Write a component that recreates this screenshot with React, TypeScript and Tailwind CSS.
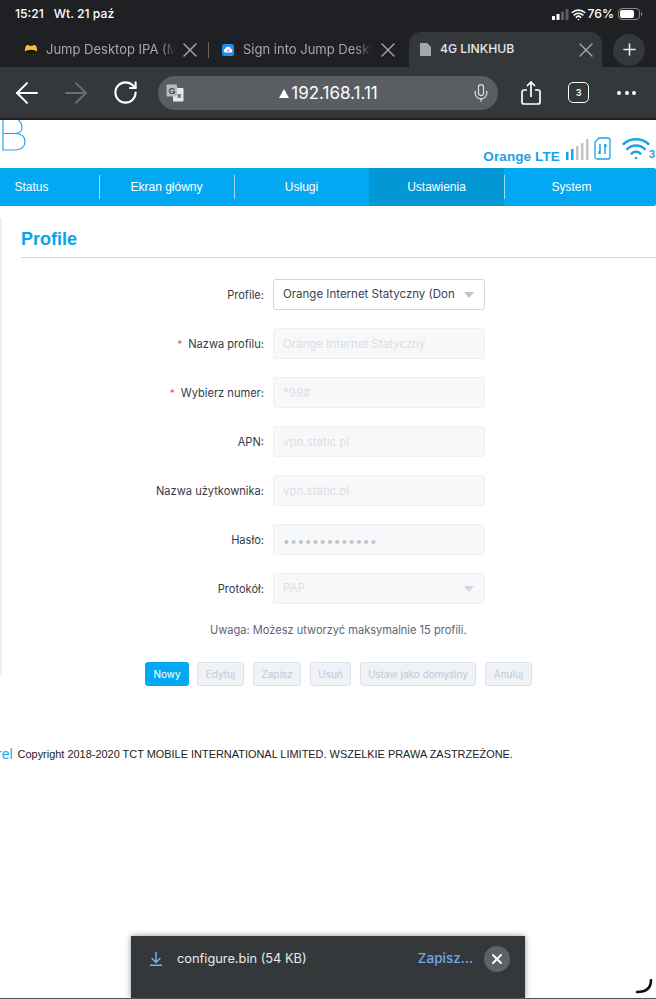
import { ArrowLeft, ArrowRight, Mic, Plus, RotateCw, Wifi, X } from 'lucide-react';

const fields = [
  { label: 'Nazwa profilu:', value: 'Orange Internet Statyczny', required: true },
  { label: 'Wybierz numer:', value: '*99#', required: true },
  { label: 'APN:', value: 'vpn.static.pl' },
  { label: 'Nazwa użytkownika:', value: 'vpn.static.pl' },
  { label: 'Hasło:', value: '•••••••••••••', password: true },
];

const navItems = [
  { name: 'Status', sep: true },
  { name: 'Ekran główny', sep: true },
  { name: 'Usługi' },
  { name: 'Ustawienia', sep: true, active: true },
  { name: 'System' },
];

const buttons = [
  { name: 'Edytuj', width: 'w-[47px]' },
  { name: 'Zapisz', width: 'w-[48px]' },
  { name: 'Usuń', width: 'w-[41px]' },
  { name: 'Ustaw jako domyślny', width: 'w-[116px]' },
  { name: 'Anuluj', width: 'w-[47px]' },
];

const Caret = ({ color }: { color: string }) => (
  <svg width="10" height="6" viewBox="0 0 10 6" className="shrink-0">
    <path d="M0 0h10L5 6z" fill={color} />
  </svg>
);

const Label = ({ text, required }: { text: string; required?: boolean }) => (
  <div className="flex w-[264px] shrink-0 items-center justify-end pt-[2px] text-[11.1px] text-[#333b4b]">
    {required && <span className="mr-[6px] text-[10px] text-[#f0504f]">*</span>}
    {text}
  </div>
);

const StatusBar = () => (
  <div className="flex h-[32px] items-center justify-between pl-[15px] pr-[13px] text-[12.2px] font-medium text-white">
    <div className="flex gap-[10px] pb-[3px]">
      <span>15:21</span>
      <span>Wt. 21 paź</span>
    </div>
    <div className="flex items-center gap-[4px] pb-[3px]">
      <svg width="17" height="11" viewBox="0 0 17 11" className="-mr-[2px]">
        <rect x="0" y="7" width="3" height="4" rx="0.6" fill="#fff" />
        <rect x="4.5" y="5" width="3" height="6" rx="0.6" fill="#fff" />
        <rect x="9" y="2.5" width="3" height="8.5" rx="0.6" fill="#5c5e62" />
        <rect x="13.5" y="0" width="3" height="11" rx="0.6" fill="#5c5e62" />
      </svg>
      <Wifi size={15} strokeWidth={2.6} color="#fff" className="-mr-[3px]" />
      <span>76%</span>
      <svg width="25" height="12" viewBox="0 0 25 12">
        <rect x="0.5" y="0.5" width="21" height="11" rx="3.5" fill="none" stroke="#85878a" />
        <rect x="2" y="2" width="14" height="8" rx="2" fill="#fff" />
        <path d="M23 4v4c.8-.3 1.3-1 1.3-2S23.800 4.300 23 4z" fill="#85878a" />
      </svg>
    </div>
  </div>
);

const TabStrip = () => (
  <div className="flex h-[35px] items-center text-[13px]">
    <div className="ml-[24px] flex shrink-0 items-center text-[#a5a7aa]">
      <svg width="14" height="12" viewBox="0 0 14 12" className="shrink-0">
        <path d="M1 6c0-3 1-5 2.500-5S5 2 7 2s2-1 3.500-1S13 3 13 6c0 3-3 5-6 5S1 9 1 6z" fill="#f3c02f" />
        <path d="M1 8c2-3 10-3 12 0-1 2-3 3-6 3S2 10 1 8z" fill="#16130c" />
      </svg>
      <span className="ml-[8px] w-[130px] overflow-hidden whitespace-nowrap [mask-image:linear-gradient(to_right,black_88%,transparent)]">
        Jump Desktop IPA (MG
      </span>
      <X size={24} strokeWidth={1.4} className="ml-[2px] shrink-0" />
    </div>
    <div className="ml-[6px] h-[16px] w-px shrink-0 bg-[#66686b]" />
    <div className="ml-[13px] flex shrink-0 items-center text-[#a5a7aa]">
      <svg width="12" height="12" viewBox="0 0 12 12" className="shrink-0">
        <rect width="12" height="12" rx="2.500" fill="#1e8ff0" />
        <path d="M3 8.500a2 2 0 0 1 .3-3.800A3 3 0 0 1 9 5a1.800 1.800 0 0 1 0 3.500z" fill="#fff" />
        <path d="M4.500 7 8 5 6.500 7.500z" fill="#e5483c" />
      </svg>
      <span className="ml-[9px] w-[129px] overflow-hidden whitespace-nowrap [mask-image:linear-gradient(to_right,black_88%,transparent)]">
        Sign into Jump Desktop
      </span>
      <X size={24} strokeWidth={1.4} className="ml-[4px] shrink-0" />
    </div>
    <div className="ml-[9px] flex h-[35px] w-[193px] shrink-0 items-center self-end rounded-t-[12px] bg-[#35383b] pl-[11px] text-[#e8e9ea]">
      <svg width="11" height="13" viewBox="0 0 11 13" className="shrink-0">
        <path d="M0 0h7l4 4v9H0z" fill="#a5a7aa" />
      </svg>
      <span className="ml-[9px] whitespace-nowrap text-[12.2px] font-medium">4G LINKHUB</span>
      <X size={24} strokeWidth={1.4} className="ml-auto mr-[4px] shrink-0 text-[#a5a7aa]" />
    </div>
    <div className="ml-[11px] flex h-[32px] w-[32px] shrink-0 items-center justify-center rounded-full bg-[#35383b]">
      <Plus size={19} strokeWidth={2} color="#e8e9ea" />
    </div>
  </div>
);

const Toolbar = () => (
  <div className="flex h-[53px] items-center border-b-2 border-[#1e1f21] bg-[#35383b] text-white">
    <ArrowLeft size={34} strokeWidth={1.4} className="ml-[10px] shrink-0" />
    <ArrowRight size={34} strokeWidth={1.4} className="ml-[15px] shrink-0 text-[#6c6e71]" />
    <RotateCw size={27} strokeWidth={1.8} className="ml-[19px] shrink-0" />
    <div className="ml-[19px] flex h-[34px] w-[340px] shrink-0 items-center rounded-full bg-[#5a5e62] pl-[8px] pr-[7px]">
      <svg width="18" height="18" viewBox="0 0 18 18" className="shrink-0">
        <rect x="7" y="4" width="10.500" height="13.500" rx="1" fill="#e8e9ea" />
        <rect x="0.500" y="0.500" width="10.500" height="12" rx="1" fill="#b9bbbd" />
        <text x="2.500" y="10" fontSize="9" fontWeight="700" fill="#44474a" fontFamily="'Liberation Sans', sans-serif">G</text>
        <text x="11" y="14" fontSize="8" fontWeight="700" fill="#44474a" fontFamily="'Liberation Sans', sans-serif">x</text>
      </svg>
      <div className="flex flex-1 items-center justify-center pl-[2px] pt-[2px] text-[17px] text-white">
        <svg width="10" height="9" viewBox="0 0 10 9" className="mr-[2px]">
          <path d="M5 0l5 9H0z" fill="#fff" />
        </svg>
        192.168.1.11
      </div>
      <Mic size={20} strokeWidth={1.5} className="shrink-0 text-[#d9dadb]" />
    </div>
    <svg width="20" height="24" viewBox="0 0 20 24" fill="none" stroke="#fff" strokeWidth="1.700" className="ml-[23px] shrink-0">
      <path d="M6 9H3a2 2 0 0 0-2 2v10a2 2 0 0 0 2 2h14a2 2 0 0 0 2-2V11a2 2 0 0 0-2-2h-3" />
      <path d="M10 16V1M6 5l4-4 4 4" />
    </svg>
    <div className="ml-[27px] flex h-[21px] w-[21px] shrink-0 items-center justify-center rounded-[5px] border-[1.500px] border-white text-[9px] font-semibold">
      3
    </div>
    <div className="ml-[28px] flex gap-[3.500px]">
      <span className="h-[4px] w-[4px] rounded-full bg-white" />
      <span className="h-[4px] w-[4px] rounded-full bg-white" />
      <span className="h-[4px] w-[4px] rounded-full bg-white" />
    </div>
  </div>
);

const RouterHeader = () => (
  <div className="flex h-[48px] justify-between overflow-hidden">
    <svg width="26" height="34" viewBox="0 0 26 34" fill="none" stroke="#1aa9ee" strokeWidth="1.200" className="ml-[2px] shrink-0">
      <path d="M1 -2V30H13C20 30 23 26 23 21.500C23 17 20 13.500 13 13.500H1M13 13.500C17 13.500 20 11 20 7C20 3 18 1 15 -2" />
    </svg>
    <div className="flex items-end pb-[4px] pr-[1px]">
      <span className="-mb-[3px] text-[13.500px] font-bold tracking-[0.1px] text-[#1aa3e8] [font-family:'Liberation_Sans',sans-serif]">
        Orange LTE
      </span>
      <svg width="24" height="21" viewBox="0 0 24 21" className="mb-[4px] ml-[6px]">
        <rect x="0" y="13" width="2.500" height="8" fill="#1aa3e8" />
        <rect x="5" y="10" width="2.500" height="11" fill="#1aa3e8" />
        <rect x="10" y="7" width="2.500" height="14" fill="#c2c4c6" />
        <rect x="15" y="4" width="2.500" height="17" fill="#c2c4c6" />
        <rect x="20" y="0" width="2.500" height="21" fill="#c2c4c6" />
      </svg>
      <svg width="17" height="23" viewBox="0 0 17 23" fill="none" stroke="#1aa3e8" strokeWidth="1.300" className="mb-[4px] ml-[4px]">
        <path d="M5 1h9a2 2 0 0 1 2 2v17a2 2 0 0 1-2 2H3a2 2 0 0 1-2-2V5z" />
        <path d="M6 7v10M6 17l-1.500-2.500M11 17V7M11 7l1.500 2.500" strokeWidth="1.500" />
      </svg>
      <Wifi size={30} strokeWidth={2} color="#1aa3e8" className="mb-px ml-[10px] shrink-0" />
      <span className="-ml-[2px] mb-[2px] text-[11px] font-bold text-[#1aa3e8] [font-family:'Liberation_Sans',sans-serif]">3</span>
    </div>
  </div>
);

const Nav = () => (
  <div className="flex h-[38px] overflow-hidden rounded-r-[2px] bg-[#02a9f2] text-[12px] text-white [font-family:'Liberation_Sans',sans-serif]">
    {navItems.map((item, i) => (
      <div
        key={item.name}
        className={`flex w-[135px] shrink-0 items-center ${i === 0 ? '-ml-[36px]' : ''} ${item.active ? 'bg-[#0397d6]' : ''}`}
      >
        <span className="flex-1 text-center">{item.name}</span>
        {item.sep && <div className="-mr-px h-[24px] w-px shrink-0 bg-white/60" />}
      </div>
    ))}
  </div>
);

const ProfileForm = () => (
  <div className="mt-[12px] h-[458px] border-l-2 border-[#f0f0f0] pl-[19px] [font-family:Inter,sans-serif]">
    <h1 className="pt-[10px] text-[18px] font-bold leading-[22px] text-[#08a5ee] [font-family:'Liberation_Sans',sans-serif]">
      Profile
    </h1>
    <div className="mt-[7px] h-px bg-[#d6d6d6]" />
    <div className="-ml-[21px] mt-[21px] flex flex-col gap-[18px]">
      <div className="flex items-center gap-[9px]">
        <Label text="Profile:" />
        <div className="flex h-[31px] w-[212px] items-center justify-between rounded-[3px] border border-[#ccd5e3] pl-[9px] pr-[10px] text-[11.5px] text-[#3b4352]">
          <span className="whitespace-nowrap">Orange Internet Statyczny (Don</span>
          <Caret color="#bcc5d2" />
        </div>
      </div>
      {fields.map(field => (
        <div key={field.label} className="flex items-center gap-[9px]">
          <Label text={field.label} required={field.required} />
          <div
            className={`flex h-[31px] w-[212px] items-center rounded-[3px] border border-[#eef0f4] bg-[#f7f8fa] pl-[9px] pt-[2px] ${field.password ? 'text-[12px] tracking-[0.5px] text-[#c0c3c9]' : 'text-[11.5px] text-[#dcdee2]'}`}
          >
            {field.value}
          </div>
        </div>
      ))}
      <div className="flex items-center gap-[9px]">
        <Label text="Protokół:" />
        <div className="flex h-[31px] w-[212px] items-center justify-between rounded-[3px] border border-[#eef0f4] bg-[#f7f8fa] pl-[9px] pr-[10px] text-[11.5px] text-[#dcdee2]">
          <span>PAP</span>
          <Caret color="#d3d8e0" />
        </div>
      </div>
    </div>
    <p className="-ml-[21px] mt-[18px] pl-[210px] text-[11.07px] leading-[16px] text-[#5c6677]">
      Uwaga: Możesz utworzyć maksymalnie 15 profili.
    </p>
    <div className="-ml-[21px] mt-[24px] flex gap-[9px] pl-[145px]">
      <div className="-mr-px flex h-[24px] w-[44px] items-center justify-center rounded-[3px] bg-[#02a9f2] text-[10px] text-white">
        Nowy
      </div>
      {buttons.map(b => (
        <div
          key={b.name}
          className={`flex h-[24px] items-center justify-center whitespace-nowrap rounded-[3px] border border-[#dde3ec] bg-[#eff2f7] text-[10px] text-[#c2c9d6] ${b.width}`}
        >
          {b.name}
        </div>
      ))}
    </div>
  </div>
);

const Footer = () => (
  <div className="mt-[71px] flex items-center whitespace-nowrap text-[10.95px] leading-[14px] text-[#222] [font-family:'Liberation_Sans',sans-serif]">
    <span className="-ml-[3px] mr-[5px] text-[14px] text-[#1aa9ee]">rel</span>
    <span>Copyright 2018-2020 TCT MOBILE INTERNATIONAL LIMITED. WSZELKIE PRAWA ZASTRZEŻONE.</span>
  </div>
);

const DownloadBar = () => (
  <div className="absolute bottom-0 left-[131px] flex h-[63px] w-[394px] items-start bg-[#35383b] pl-[18px] pr-[15px] pt-[9px] text-[#e8e9ea] shadow-[0_0_6px_rgba(0,0,0,0.45)] [font-family:Inter,sans-serif]">
    <div className="flex h-[27px] w-full items-center">
      <svg width="14" height="14" viewBox="0 0 14 14" fill="none" stroke="#79b1ee" strokeWidth="1.400" className="shrink-0">
        <path d="M7 0v10M2.500 6 7 10.500 11.500 6M1 13.300h12" />
      </svg>
      <span className="ml-[14px] text-[12.8px]">configure.bin (54 KB)</span>
      <span className="ml-auto text-[13.500px] font-medium text-[#6ea8ec]">Zapisz...</span>
      <div className="ml-[11px] flex h-[26px] w-[26px] items-center justify-center rounded-full bg-[#5e6166]">
        <X size={16} strokeWidth={3} color="#fff" />
      </div>
    </div>
  </div>
);

export default function App() {
  return (
    <div className="relative h-[999px] w-[656px] overflow-hidden bg-white">
      <div className="bg-[#1f2023] [font-family:Inter,sans-serif]">
        <StatusBar />
        <TabStrip />
        <Toolbar />
      </div>
      <RouterHeader />
      <Nav />
      <ProfileForm />
      <Footer />
      <DownloadBar />
      <div className="absolute inset-x-0 bottom-0 h-px bg-[#555]" />
      <svg width="18" height="18" viewBox="0 0 18 18" fill="none" stroke="#111" strokeWidth="2.600" strokeLinecap="round" className="absolute left-[635px] top-[979px]">
        <path d="M16 1c0 7-4 12-14 12" />
      </svg>
    </div>
  );
}
